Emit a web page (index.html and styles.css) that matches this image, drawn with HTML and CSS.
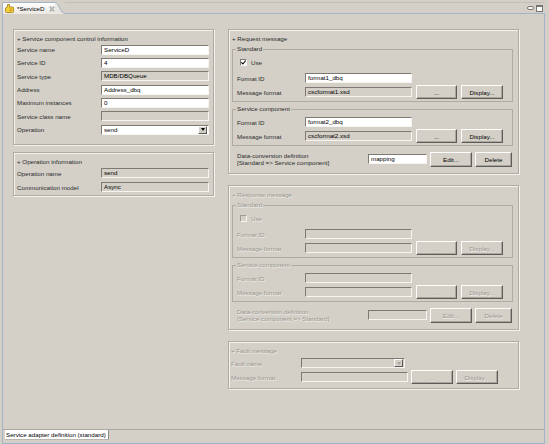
FILE: index.html
```html
<!DOCTYPE html>
<html lang="en">
<head>
    <meta charset="UTF-8">
    <meta name="viewport" content="width=device-width, initial-scale=1.0">
    <title>ServiceD</title>
    <link rel="stylesheet" href="styles.css">
</head>
<body>
    <div id="window">
        <div class="tabbar">
            <div class="tab">
                <svg class="tab-icon" width="9" height="9" viewBox="0 0 9 9">
                    <path d="M2.5 0.5 L4.5 0.5 L4.5 3 L7.5 3 Q8.5 3 8.5 4 L8.5 7.5 Q8.5 8.5 7.5 8.5 L1.5 8.5 Q0.5 8.5 0.5 7.5 L0.5 4 L2.5 3 Z" fill="#f4d13a" stroke="#a67a12" stroke-width="0.8"/>
                    <path d="M4.5 5 L7 5 M4.5 6.5 L7 6.5" stroke="#a67a12" stroke-width="0.6"/>
                </svg>
                <span class="tab-title">*ServiceD</span>
                <svg class="tab-close" width="6" height="6" viewBox="0 0 6 6">
                    <path d="M0.8 0.8 L5.2 5.2 M5.2 0.8 L0.8 5.2" stroke="#8a8882" stroke-width="1.4"/>
                    <path d="M0.8 0.8 L5.2 5.2 M5.2 0.8 L0.8 5.2" stroke="#e8e7e2" stroke-width="0.5"/>
                </svg>
            </div>
            <svg class="tab-curve" width="10" height="12" viewBox="0 0 10 12">
                <path d="M0 0.5 C4 0.5 5 11.5 10 11.5 L10 12 L0 12 Z" fill="#e9e7e1"/>
                <path d="M0 0.5 C4 0.5 5 11.5 10 11.5" fill="none" stroke="#a5b3c9" stroke-width="1"/>
            </svg>
            <div class="tab-fill">
                <span class="view-min"></span>
                <span class="view-max"></span>
            </div>
        </div>

        <div class="editor">
            <div class="page">
                <div class="col-left">
                    <div class="box box-control">
                        <div class="box-title">+ Service component control information</div>
                        <div class="row"><span class="lbl">Service name</span><span class="field">ServiceD</span></div>
                        <div class="row"><span class="lbl">Service ID</span><span class="field">4</span></div>
                        <div class="row"><span class="lbl">Service type</span><span class="field ro">MDB/DBQueue</span></div>
                        <div class="row"><span class="lbl">Address</span><span class="field">Address_dbq</span></div>
                        <div class="row"><span class="lbl">Maximum instances</span><span class="field">0</span></div>
                        <div class="row"><span class="lbl">Service class name</span><span class="field ro"></span></div>
                        <div class="row"><span class="lbl">Operation</span><span class="field combo"><span class="combo-text">send</span><span class="drop"></span></span></div>
                    </div>
                    <div class="box box-op">
                        <div class="box-title">+ Operation information</div>
                        <div class="row"><span class="lbl">Operation name</span><span class="field ro">send</span></div>
                        <div class="row"><span class="lbl">Communication model</span><span class="field ro">Async</span></div>
                    </div>
                </div>

                <div class="col-right">
                    <div class="box box-msg">
                        <div class="box-title">+ Request message</div>
                        <fieldset class="sub">
                            <legend>Standard</legend>
                            <div class="row row-use"><span class="check on"><svg width="5" height="5" viewBox="0 0 5 5"><path d="M0.3 2.3 L1.9 4 L4.7 0.6" fill="none" stroke="#000" stroke-width="1.1"/></svg></span><span>Use</span></div>
                            <div class="row"><span class="lbl">Format ID</span><span class="field">format1_dbq</span></div>
                            <div class="row"><span class="lbl">Message format</span><span class="field ro">cscformat1.xsd</span><span class="btn">...</span><span class="btn">Display...</span></div>
                        </fieldset>
                        <fieldset class="sub sub-comp">
                            <legend>Service component</legend>
                            <div class="row row-first"><span class="lbl">Format ID</span><span class="field">format2_dbq</span></div>
                            <div class="row"><span class="lbl">Message format</span><span class="field ro">cscformat2.xsd</span><span class="btn">...</span><span class="btn">Display...</span></div>
                        </fieldset>
                        <div class="row row-conv">
                            <span class="conv-lbl">Data-conversion definition<br>[Standard =&gt; Service component]</span>
                            <span class="field conv-field">mapping</span>
                            <span class="btn btn-edit">Edit...</span>
                            <span class="btn btn-del">Delete</span>
                        </div>
                    </div>

                    <div class="box box-msg off">
                        <div class="box-title">+ Response message</div>
                        <fieldset class="sub">
                            <legend>Standard</legend>
                            <div class="row row-use"><span class="check"></span><span>Use</span></div>
                            <div class="row"><span class="lbl">Format ID</span><span class="field ro"></span></div>
                            <div class="row"><span class="lbl">Message format</span><span class="field ro"></span><span class="btn">...</span><span class="btn">Display...</span></div>
                        </fieldset>
                        <fieldset class="sub sub-comp">
                            <legend>Service component</legend>
                            <div class="row row-first"><span class="lbl">Format ID</span><span class="field ro"></span></div>
                            <div class="row"><span class="lbl">Message format</span><span class="field ro"></span><span class="btn">...</span><span class="btn">Display...</span></div>
                        </fieldset>
                        <div class="row row-conv">
                            <span class="conv-lbl">Data-conversion definition<br>[Service component =&gt; Standard]</span>
                            <span class="field ro conv-field"></span>
                            <span class="btn btn-edit">Edit...</span>
                            <span class="btn btn-del">Delete</span>
                        </div>
                    </div>

                    <div class="box box-fault off">
                        <div class="box-title">+ Fault message</div>
                        <div class="row"><span class="lbl">Fault name</span><span class="field ro combo"><span class="combo-text"></span><span class="drop"></span></span></div>
                        <div class="row"><span class="lbl">Message format</span><span class="field ro"></span><span class="btn">...</span><span class="btn">Display...</span></div>
                    </div>
                </div>
            </div>
            <div class="pagetabs">
                <span class="pagetab">Service adapter definition (standard)</span>
            </div>
        </div>
    </div>
</body>
</html>
```

FILE: styles.css
```css
* {
    box-sizing: border-box;
}
body {
    margin: 0;
    background: #d4d0c8;
    font-family: "Liberation Sans", Arial, sans-serif;
    font-size: 6.2px;
    color: #2a2a2a;
}
#window {
    width: 549px;
    height: 444px;
    display: flex;
    flex-direction: column;
}

/* editor tab at the top */
.tabbar {
    height: 14px;
    margin: 0 4px 0 2px;
    display: flex;
    align-items: flex-end;
}
.tab {
    height: 12px;
    display: flex;
    align-items: center;
    gap: 2px;
    padding-left: 2px;
    background: linear-gradient(#ffffff, #e9e7e1);
    border-left: 1px solid #a5b3c9;
    border-top: 1px solid #a5b3c9;
    border-top-left-radius: 2px;
}
.tab-icon {
    margin-right: 1px;
}
.tab-title {
    color: #000;
    margin-right: 2px;
}
.tab-curve {
    display: block;
}
.tab-fill {
    flex: 1;
    height: 12px;
    display: flex;
    justify-content: flex-end;
    align-items: flex-start;
    gap: 2px;
    padding: 2px 2px 0 0;
    border-top: 1px solid #c2bfb8;
    border-bottom: 1px solid #a5b3c9;
}
.view-min {
    width: 7px;
    height: 4px;
    margin-top: 1px;
    background: #fff;
    border: 1px solid #77756f;
    border-radius: 2px;
}
.view-max {
    width: 7px;
    height: 7px;
    background: #fff;
    border: 1px solid #77756f;
    border-top-width: 2px;
}

/* editor body */
.editor {
    flex: 1;
    margin: 0 4px 0 2px;
    border: 1px solid #a5b3c9;
    border-top: none;
    display: flex;
    flex-direction: column;
}
.page {
    flex: 1;
    display: flex;
    align-items: flex-start;
    gap: 14px;
    padding: 15px 0 0 10px;
}
.pagetabs {
    height: 14px;
    border-top: 1px solid #a9a7a0;
    padding-left: 2px;
    display: flex;
    align-items: flex-start;
}
.pagetab {
    height: 10px;
    line-height: 10px;
    padding: 0 2px 0 1px;
    background: #fff;
    color: #000;
    border-right: 1px solid #8d8b85;
    border-bottom: 1px solid #b9b6af;
}

/* group boxes */
.box {
    border: 1px solid #aeaba3;
    box-shadow: inset 1px 1px 0 #f3f2ee, 1px 1px 0 #f3f2ee;
}
.box-title {
    height: 10px;
    line-height: 10px;
}
.row {
    display: flex;
    align-items: center;
    height: 14px;
}
.lbl {
    flex: none;
}
.field {
    flex: none;
    height: 10px;
    line-height: 8px;
    padding-left: 2px;
    background: #fff;
    color: #000;
    border: 1px solid;
    border-color: #7d7a74 #f6f5f1 #f6f5f1 #7d7a74;
    overflow: hidden;
    white-space: nowrap;
}
.field.ro {
    background: #d4d0c8;
}
.combo {
    display: flex;
    align-items: center;
    padding-right: 1px;
}
.combo-text {
    flex: 1;
}
.drop {
    width: 9px;
    height: 8px;
    background: #d4d0c8;
    border: 1px solid;
    border-color: #fff #5e5c58 #5e5c58 #fff;
    display: flex;
    align-items: center;
    justify-content: center;
}
.drop::after {
    content: "";
    border-top: 3px solid #000;
    border-left: 2.5px solid transparent;
    border-right: 2.5px solid transparent;
}
.btn {
    flex: none;
    height: 14px;
    display: flex;
    align-items: center;
    justify-content: center;
    border: 1px solid;
    border-color: #fdfdfc #5e5c58 #5e5c58 #fdfdfc;
    box-shadow: inset -1px -1px 0 #a9a69f;
    color: #000;
}

/* left column */
.col-left {
    width: 201px;
}
.box-control {
    padding: 4px 4px 8px 3px;
}
.box-control .box-title {
    height: 9px;
    line-height: 9px;
}
.box-control .row {
    height: 13.33px;
}
.box-op {
    margin-top: 7px;
    padding: 4px 4px 1px 3px;
}
.box-op .box-title {
    height: 9px;
    line-height: 9px;
}
.col-left .lbl {
    width: 84px;
}
.col-left .field {
    width: 108px;
}

/* right column */
.col-right {
    width: 291px;
}
.box-msg {
    padding: 4px 5px 6px 2px;
}
.box-msg + .box-msg {
    margin-top: 11px;
}
.box-msg .box-title {
    padding-left: 1px;
}
fieldset.sub {
    margin: 1px 0 0 1px;
    padding: 0 0 2px 4px;
    border: 1px solid #aeaba3;
    min-width: 0;
}
fieldset.sub-comp {
    margin-top: 3px;
}
fieldset.sub legend {
    padding: 0 1px;
    margin-left: -1px;
    line-height: 8px;
}
fieldset.sub .row-use,
fieldset.sub .row-first {
    margin-top: 2px;
}
.row-use + .row {
    margin-top: 2px;
}
.row-use {
    padding-left: 3px;
    gap: 4px;
}
.check {
    width: 7px;
    height: 7px;
    background: #fff;
    border: 1px solid;
    border-color: #7d7a74 #f6f5f1 #f6f5f1 #7d7a74;
    display: flex;
    align-items: center;
    justify-content: center;
}
.box-msg .lbl {
    width: 68px;
}
.box-msg .field {
    width: 107px;
}
.box-msg .btn {
    width: 41px;
    margin-left: 4px;
}
.box-msg .btn + .btn {
    width: 42px;
}
.row-conv {
    height: 16px;
    margin-top: 5px;
    padding: 0 1px 0 6px;
}
.conv-lbl {
    flex: 1;
    line-height: 7px;
}
.box-msg .conv-field {
    width: 59px;
}
.box-msg .btn-edit {
    width: 42px;
    height: 15px;
    margin-left: 3px;
}
.box-msg .btn.btn-del {
    width: 37px;
    height: 15px;
    margin-left: 3px;
}

.box-fault {
    margin-top: 11px;
    padding: 4px 5px 4px 2px;
}
.box-fault .lbl {
    width: 70px;
}
.box-fault .field {
    width: 107px;
}
.box-fault .combo.field {
    width: 104px;
}
.box-fault .btn {
    width: 42px;
    margin-left: 3px;
}

/* disabled sections */
.off,
.off .btn {
    color: #99968f;
    text-shadow: 0.5px 0.5px 0 #f2f1ed;
}
.off .check {
    background: #d4d0c8;
    border-color: #a09d96 #f6f5f1 #f6f5f1 #a09d96;
}
.off .drop::after {
    border-top-color: #a7a49d;
}
```
